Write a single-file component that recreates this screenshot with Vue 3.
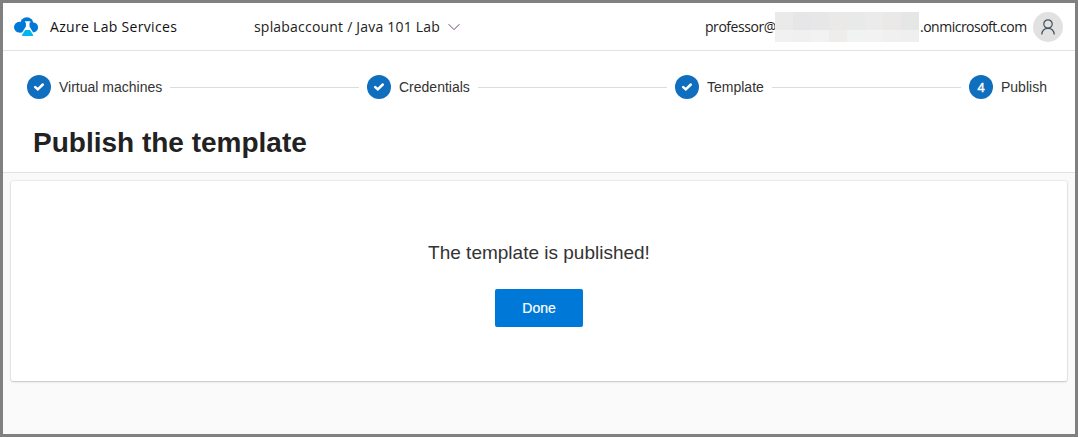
<script setup>
const steps = [
  { label: 'Virtual machines', done: true, width: 103 },
  { label: 'Credentials', done: true, width: 71 },
  { label: 'Template', done: true, width: 57 },
  { label: 'Publish', done: false, width: 46 },
]
const mosaic = [
  '#eaeaea', '#e6e6e8', '#e7e7e8', '#ebe9e8', '#e8eae9', '#ebebeb', '#eae9e8', '#e5e7e7',
  '#f1f1f1', '#f0f0f1', '#f2f2f2', '#eeedec', '#f1f2f2', '#f2f2f2', '#f0f0f0', '#efefef',
]
</script>

<template>
  <div class="window">
    <header class="topbar">
      <svg class="logo" width="24" height="20" viewBox="0 0 24 20">
        <g fill="#0078d7">
          <circle cx="5.4" cy="10.2" r="5.4" />
          <circle cx="12.8" cy="6.9" r="6.7" />
          <circle cx="19" cy="10.4" r="5" />
          <path d="M5 8h14v7.4H5Z" />
        </g>
        <path fill="#fff" d="M11 4.2h5.4v1.4h-.9v4l4.1 6.6v3H7.6v-3l4.3-6.6v-4H11Z" />
        <path fill="#00b7f0" d="M11.2 13h4.8l3.2 4.9q.5 1.1-.7 1.1H8.7q-1.2 0-.7-1.1Z" />
      </svg>
      <span class="brand">Azure Lab Services</span>
      <span class="lab">splabaccount / Java 101 Lab</span>
      <svg class="chevron" width="12" height="8" viewBox="0 0 12 8">
        <path d="M.6 1.2 6 6.6 11.4 1.2" fill="none" stroke="#6b4a78" stroke-width="1" />
      </svg>
      <div class="account">
        <span class="user">professor@</span>
        <div class="mosaic">
          <i v-for="(color, i) in mosaic" :key="i" :style="{ background: color }"></i>
        </div>
        <span class="domain">.onmicrosoft.com</span>
        <div class="avatar">
          <svg width="14" height="16" viewBox="0 0 14 16" fill="none" stroke="#46515c" stroke-width="1.2">
            <circle cx="7" cy="5" r="4.2" />
            <path d="M.8 15.5C1 11.7 3.4 9.3 7 9.3s6 2.4 6.2 6.2" />
          </svg>
        </div>
      </div>
    </header>
    <section class="intro">
      <nav class="stepper">
        <template v-for="(step, i) in steps" :key="step.label">
          <div v-if="i" class="line"></div>
          <div class="step">
            <span class="dot">
              <svg v-if="step.done" class="check" width="12" height="10" viewBox="0 0 12 10">
                <path d="M2.2 5.1 4.8 7.3 9.8 2.5" fill="none" stroke="#fff" stroke-width="2.5" stroke-linecap="round" />
              </svg>
              <template v-else>{{ i + 1 }}</template>
            </span>
            <span class="label" :style="{ width: step.width + 'px' }">{{ step.label }}</span>
          </div>
        </template>
      </nav>
      <h1>Publish the template</h1>
    </section>
    <main class="card">
      <p>The template is published!</p>
      <button type="button">Done</button>
    </main>
  </div>
</template>

<style>
body { overflow: hidden; }
</style>

<style scoped>
.window {
  box-sizing: border-box;
  width: 1078px;
  height: 437px;
  border: 3px solid #808080;
  background: #fafafa;
  font-family: "Liberation Sans", Arial, sans-serif;
  color: #222;
}
.topbar {
  box-sizing: border-box;
  display: flex;
  align-items: center;
  height: 48px;
  padding: 0 12px 0 11px;
  border-bottom: 1px solid #e3e3e3;
  background: #fff;
  font: 14px/20px "Open Sans", sans-serif;
  white-space: nowrap;
}
.logo { flex: none; margin: 0 12px 0 0; }
.brand { width: 204px; color: #111; font-weight: 500; letter-spacing: .31px; }
.lab { width: 186px; letter-spacing: .2px; }
.chevron { margin-left: 8px; }
.account { display: flex; align-items: center; margin-left: auto; }
.user { width: 70px; letter-spacing: -.45px; }
.mosaic {
  display: grid;
  grid-template: 18px 12px / repeat(8, 18px);
}
.domain { width: 107px; margin-left: 1px; letter-spacing: -.5px; }
.avatar {
  display: flex;
  align-items: center;
  justify-content: center;
  width: 30px;
  height: 30px;
  margin-left: 6px;
  border-radius: 50%;
  background: #e1e1e1;
}
.intro {
  box-sizing: border-box;
  height: 122px;
  padding: 24px 28px 0 24px;
  border-bottom: 1px solid #e2e2e2;
  background: #fff;
}
.stepper { display: flex; align-items: center; height: 24px; }
.step { display: flex; align-items: center; }
.dot {
  display: flex;
  align-items: center;
  justify-content: center;
  width: 24px;
  height: 24px;
  margin-right: 8px;
  border-radius: 50%;
  background: #106ebe;
  color: #fff;
  font-size: 13px;
  -webkit-text-stroke: .4px #fff;
}
.check { margin-bottom: 1px; }
.label { font-size: 14px; line-height: 20px; white-space: nowrap; color: #333; }
.line { flex: 1; height: 1px; margin: 0 8px; background: #dcdcdc; }
h1 {
  margin: 28px 0 0 6px;
  font-size: 28px;
  line-height: 32px;
  font-weight: 700;
}
.card {
  box-sizing: border-box;
  display: flex;
  flex-direction: column;
  align-items: center;
  height: 200px;
  margin: 8px 8px 0;
  padding-top: 59px;
  border-radius: 2px;
  background: #fff;
  box-shadow: 0 0 2px rgba(0, 0, 0, .2), 0 1px 2px rgba(0, 0, 0, .16);
}
p { margin: 0; font-size: 19px; line-height: 26px; color: #333; }
button {
  width: 88px;
  height: 38px;
  margin-top: 23px;
  padding: 0;
  border: 0;
  border-radius: 2px;
  background: #0078d7;
  color: #fff;
  font: 14px "Liberation Sans", Arial, sans-serif;
  -webkit-text-stroke: .2px #fff;
}
</style>
